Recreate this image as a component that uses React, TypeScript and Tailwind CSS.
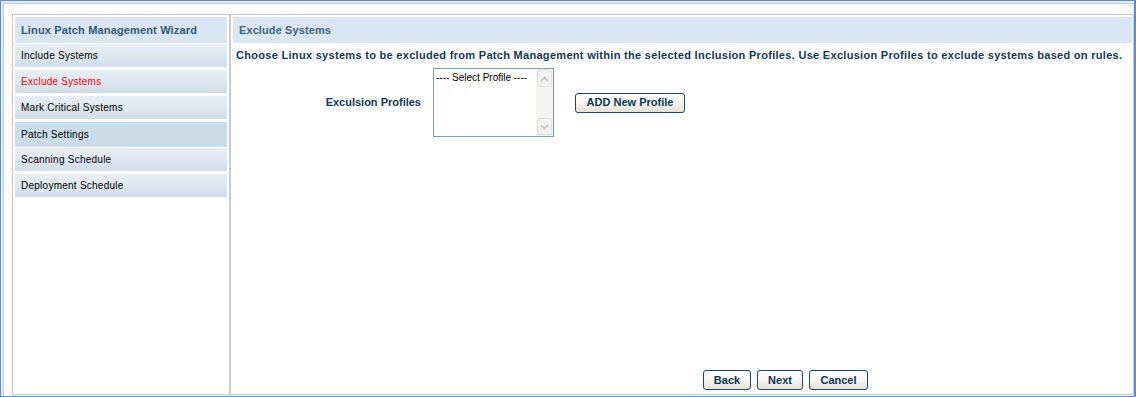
import React from "react";

const font = "font-['Liberation_Sans',Arial,sans-serif]";

const steps = [
  { label: "Include Systems" },
  { label: "Exclude Systems", active: true },
  { label: "Mark Critical Systems" },
  { label: "Patch Settings", hover: true },
  { label: "Scanning Schedule" },
  { label: "Deployment Schedule" },
];

const XpButton: React.FC<{ label: string; className?: string }> = ({ label, className }) => (
  <button
    className={`h-[20px] rounded-[3px] border border-[#1e4468] bg-gradient-to-b from-[#ffffff] via-[#f6f5f0] to-[#e3e1d6] text-[11px] font-bold text-[#0d3556] leading-none ${className ?? ""}`}
  >
    {label}
  </button>
);

const Chevron: React.FC<{ up?: boolean }> = ({ up }) => (
  <svg width="9" height="6" viewBox="0 0 9 6" className="block">
    <path
      d={up ? "M1 5 L4.5 1.5 L8 5" : "M1 1 L4.5 4.5 L8 1"}
      fill="none"
      stroke="#c3c2bb"
      strokeWidth="1.6"
    />
  </svg>
);

export default function App() {
  return (
    <div className={`${font} w-[1136px] h-[397px] bg-white border-t border-l border-b border-r-2 border-[#5a8fd8]`}>
      <div className="h-full border-t-2 border-l-2 border-[#e4ebf6]">
        <div className="h-full border-t border-l border-[#c9ced6]">
          <div className="h-full pl-[8px] pt-[10px] pb-[1px]">
            <div className="h-full flex border border-[#c8c8c8]">
              {/* wizard steps */}
              <div className="w-[216px] shrink-0 pt-[2px] pl-[2px] pr-[2px]">
                <div className="h-[26px] mb-[1px] flex items-center pl-[6px] bg-[#d9e5f2] text-[11px] font-bold tracking-[0.15px] text-[#2f5a79]">
                  Linux Patch Management Wizard
                </div>
                {steps.map((s) => (
                  <div
                    key={s.label}
                    className={`flex items-center pl-[6px] text-[10px] tracking-[0.25px] ${
                      s.hover
                        ? "h-[25px] mb-[1px] bg-[#cadbea]"
                        : "h-[23px] mb-[3px] bg-gradient-to-b from-[#e6eef6] via-[#dee8f1] to-[#cfdce8]"
                    } ${s.active ? "text-[#ff0000]" : "text-black"}`}
                  >
                    {s.label}
                  </div>
                ))}
              </div>

              <div className="w-[2px] shrink-0 bg-[#cccccc]" />

              {/* content */}
              <div className="flex-1 flex flex-col pt-[2px] pl-[2px] pr-[1px]">
                <div className="h-[26px] flex items-center pl-[6px] bg-[#dae6f3] text-[11px] font-bold tracking-[0.1px] text-[#3a6484]">
                  Exclude Systems
                </div>
                <p className="pl-[3px] pt-[5px] text-[11px] font-bold tracking-[0.3px] text-[#103a58] leading-[14px] whitespace-nowrap">
                  Choose Linux systems to be excluded from Patch Management within the selected Inclusion Profiles. Use Exclusion Profiles to exclude systems based on rules.
                </p>

                <div className="flex items-center mt-[6px]">
                  <div className="w-[188px] text-right text-[11px] font-bold text-[#103a58]">Exculsion Profiles</div>
                  <div className="ml-[12px] w-[121px] h-[69px] border border-[#7f9db9] bg-white flex">
                    <div className="flex-1 pl-[2px] pt-[3px] text-[10px] text-black leading-[12px]">
                      ---- Select Profile ----
                    </div>
                    <div className="w-[17px] flex flex-col bg-[#f5f4ef]">
                      <div className="h-[17px] m-[1px] rounded-[2px] border border-[#e2e1da] bg-[#f3f2ec] flex items-center justify-center">
                        <Chevron up />
                      </div>
                      <div className="flex-1" />
                      <div className="h-[17px] m-[1px] rounded-[2px] border border-[#e2e1da] bg-[#f3f2ec] flex items-center justify-center">
                        <Chevron />
                      </div>
                    </div>
                  </div>
                  <XpButton label="ADD New Profile" className="ml-[21px] w-[110px]" />
                </div>

                <div className="mt-auto flex gap-[6px] pl-[470px] pb-[4px]">
                  <XpButton label="Back" className="w-[48px]" />
                  <XpButton label="Next" className="w-[46px]" />
                  <XpButton label="Cancel" className="w-[59px]" />
                </div>
              </div>
            </div>
          </div>
        </div>
      </div>
    </div>
  );
}
